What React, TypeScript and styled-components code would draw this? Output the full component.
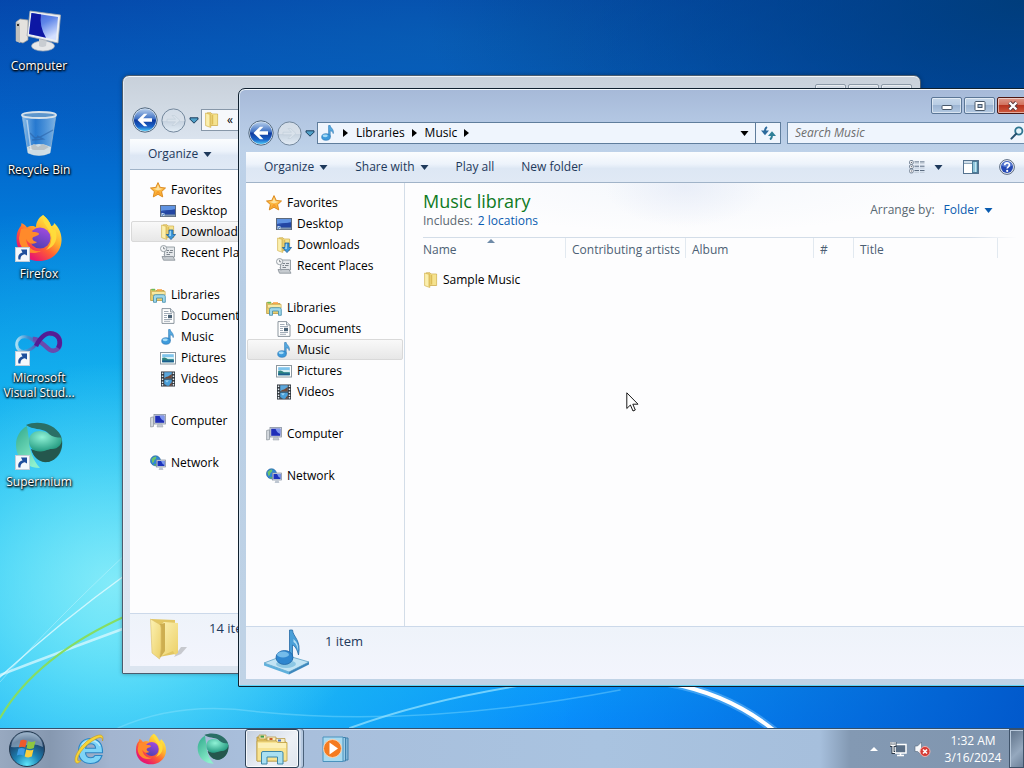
import type { ReactNode } from 'react';
import styled, { createGlobalStyle, css } from 'styled-components';

const GlobalStyle = createGlobalStyle`
  * {
    box-sizing: border-box;
  }

  body {
    margin: 0;
    font-family: 'Open Sans', 'Noto Sans', sans-serif;
    font-size: 12px;
    line-height: 16px;
    color: #000;
  }

  button, input {
    font: inherit;
    color: inherit;
  }

  button {
    border: 0;
    padding: 0;
    background: none;
  }

  a {
    color: inherit;
    text-decoration: none;
  }

  ul {
    list-style: none;
    margin: 0;
    padding: 0;
  }

  svg {
    display: block;
    flex: none;
  }
`;

/* ---------- desktop ---------- */

const Page = styled.div`
  height: 100vh;
  display: flex;
  flex-direction: column;
  overflow: hidden;
  position: relative;
`;

const Desktop = styled.main`
  flex: 1;
  position: relative;
  overflow: hidden;
  background:
    radial-gradient(ellipse 260px 220px at 11% 80%, rgba(150, 242, 250, 0.8), rgba(120, 235, 250, 0.4) 55%, rgba(90, 220, 250, 0) 100%),
    radial-gradient(ellipse 480px 420px at 10% 86%, rgba(60, 212, 246, 0.95), rgba(30, 190, 243, 0.6) 55%, rgba(10, 160, 235, 0) 100%),
    radial-gradient(ellipse 600px 300px at 100% 0, rgba(0, 58, 112, 0.85), rgba(0, 60, 130, 0)),
    linear-gradient(90deg, rgba(0, 80, 200, 0) 55%, rgba(0, 80, 196, 0.85) 100%),
    radial-gradient(ellipse 520px 160px at 44% 6%, rgba(10, 100, 180, 0.6), rgba(10, 100, 180, 0)),
    linear-gradient(180deg, #0446ac 0, #0460c6 16%, #0278d8 30%, #069ce8 52%, #10b0f2 78%, #088cfc 100%);
`;

const Wallpaper = styled.svg`
  position: absolute;
  inset: 0;
  width: 100%;
  height: 100%;
`;

const Shortcuts = styled.ul`
  position: relative;
  width: 78px;
  padding-top: 6px;
`;

const ShortcutItem = styled.li`
  height: 104px;
`;

const ShortcutLink = styled.a`
  display: flex;
  flex-direction: column;
  align-items: center;
  gap: 4px;
  line-height: 15px;
  color: #fff;
  text-align: center;
  text-shadow: 0 1px 2px #000, 1px 1px 2px #000, 0 0 3px rgba(0, 0, 0, 0.7);
`;

const ShortcutPicture = styled.span`
  position: relative;
  width: 48px;
  height: 48px;
`;

const ShortcutArrow = styled.svg`
  position: absolute;
  left: 0;
  bottom: 0;
`;

/* ---------- explorer window ---------- */

const Frame = styled.section<{ $active: boolean; $x: number; $y: number }>`
  position: absolute;
  left: ${p => p.$x}px;
  top: ${p => p.$y}px;
  width: calc(100% - 225px);
  height: calc(100% - 129px);
  display: flex;
  flex-direction: column;
  padding: 0 7px 7px;
  border: 1px solid ${p => (p.$active ? '#10202e' : '#4b5c6e')};
  border-radius: 7px 7px 1px 1px;
  ${p =>
    p.$active
      ? css`
          background: linear-gradient(180deg, #a6b9d8 0, #b2c6e2 30px, #bed2e9 62px, #b8cee5 200px, #c0d3e6 100%);
          box-shadow: inset 0 1px 0 #f4faff, inset 0 -1px 0 #5fd4f8, inset 1px 0 0 #d5e4f2;
        `
      : css`
          background: linear-gradient(180deg, #c8d0da 0, #d0d9e3 30px, #dae3ee 62px, #dce5f0 100%);
          box-shadow: inset 0 1px 0 #f2f6fa, inset 1px 0 0 #e4ecf4, 0 0 4px rgba(0, 0, 0, 0.3);
        `}
`;

const Caption = styled.div`
  display: flex;
  justify-content: flex-end;
  gap: 2px;
  padding: 8px 1px 8px 0;
`;

const CaptionButton = styled.button<{ $close?: boolean; $active: boolean }>`
  width: 31px;
  height: 17px;
  display: flex;
  align-items: center;
  justify-content: center;
  border: 1px solid ${p => (p.$active ? (p.$close ? '#4d1610' : '#5b7696') : '#8c9aa8')};
  border-radius: 2px;
  box-shadow: inset 0 0 0 1px rgba(255, 255, 255, 0.5);
  background: ${p => {
    if (!p.$active) return 'linear-gradient(#d4dce5, #c9d3de)';
    return p.$close
      ? 'linear-gradient(#dc9a8c 0, #d2705c 48%, #b83420 50%, #cf5a3e 100%)'
      : 'linear-gradient(#c6d7ea 0, #b8cce3 48%, #9db5d3 50%, #b3c9e2 100%)';
  }};
`;

const AddressRow = styled.div`
  display: flex;
  height: 22px;
  margin-bottom: 8px;
`;

const Travel = styled.div`
  width: 71px;
  flex: none;
  display: flex;
  align-items: center;
  gap: 3px;
  padding-left: 2px;
`;

const AddressBar = styled.div<{ $active: boolean }>`
  flex: 1;
  display: flex;
  align-items: stretch;
  border: 1px solid ${p => (p.$active ? '#5f7d9c' : '#8797a8')};
  background: ${p => (p.$active ? '#eff5fd' : '#f6f8fb')};
  margin-right: 6px;
`;

const Crumbs = styled.ol`
  flex: 1;
  display: flex;
  align-items: center;
  gap: 8px;
  margin: 0;
  padding: 0 0 0 2px;
  list-style: none;

  li {
    display: flex;
    align-items: center;
    gap: 7px;
  }
`;

const AddressButton = styled.button<{ $divided?: boolean }>`
  width: ${p => (p.$divided ? 25 : 21)}px;
  display: flex;
  align-items: center;
  justify-content: center;
  border-left: ${p => (p.$divided ? '1px solid #5f7d9c' : '0')};
`;

const SearchBox = styled.label`
  flex: 0 0 242px;
  display: flex;
  align-items: center;
  padding: 0 4px 0 7px;
  border: 1px solid #6f8cab;
  background: #eff5fd;
`;

const SearchInput = styled.input`
  flex: 1;
  min-width: 0;
  border: 0;
  padding: 0;
  outline: 0;
  background: none;

  &::placeholder {
    color: #6d6d6d;
    opacity: 1;
    font-style: italic;
  }
`;

const CommandBar = styled.div`
  flex: none;
  height: 31px;
  display: flex;
  align-items: center;
  gap: 27px;
  padding: 0 14px 0 18px;
  color: #1e395b;
  border-bottom: 1px solid #a0b3c8;
  background: linear-gradient(180deg, #fbfdfe 0, #edf3fb 40%, #dde7f4 55%, #e0e9f5 100%);
`;

const CommandButton = styled.button`
  display: flex;
  align-items: center;
  gap: 5px;
  white-space: nowrap;
`;

const CommandIcons = styled.div`
  margin-left: auto;
  display: flex;
  align-items: center;
  gap: 20px;
`;

const ViewButton = styled(CommandButton)`
  gap: 9px;
`;

const Body = styled.div`
  flex: 1;
  min-height: 0;
  display: flex;
  background: #fdfdfe;
`;

const NavPane = styled.nav`
  flex: 0 0 159px;
  display: flex;
  flex-direction: column;
  gap: 21px;
  padding: 9px 1px 0;
  border-right: 1px solid #d3dde8;
`;

const NavLink = styled.a<{ $child?: boolean; $selected?: boolean }>`
  height: 21px;
  display: flex;
  align-items: center;
  gap: 5px;
  padding-left: ${p => (p.$child ? 28 : 18)}px;
  white-space: nowrap;
  border: 1px solid transparent;
  border-radius: 2px;
  ${p =>
    p.$selected &&
    css`
      border-color: #d9d9d9;
      background: linear-gradient(#f9f9f9, #e7e7e7);
    `}
`;

const Listing = styled.div`
  flex: 1;
  min-width: 0;
  background:
    radial-gradient(ellipse 80px 40px at 280px 4px, rgba(226, 232, 246, 0.6), rgba(255, 255, 255, 0)),
    radial-gradient(ellipse 260px 50px at 280px 0, rgba(236, 242, 250, 0.5), rgba(255, 255, 255, 0));
`;

const LibraryHeader = styled.header`
  height: 54px;
  display: flex;
  align-items: center;
  justify-content: space-between;
  padding: 0 36px 0 18px;
  color: #5a6872;
`;

const LibraryTitle = styled.h1`
  margin: 0 0 2px;
  font-size: 18px;
  line-height: 20px;
  font-weight: 400;
  color: #0f7a1e;
`;

const Includes = styled.p`
  margin: 0;
  display: flex;
  gap: 5px;
`;

const Arrange = styled.div`
  display: flex;
  align-items: center;
  gap: 9px;
`;

const BlueLink = styled.a`
  color: #0a5cb0;
`;

const ArrangeButton = styled(CommandButton)`
  color: #0a5cb0;
`;

const Rule = styled.hr`
  margin: 0 12px 0 18px;
  height: 1px;
  border: 0;
  background: linear-gradient(90deg, #d3dde8 92%, rgba(211, 221, 232, 0));
`;

const FileTable = styled.table`
  table-layout: fixed;
  width: 581px;
  margin-left: 12px;
  border-collapse: separate;
  border-spacing: 0;
  text-align: left;
  white-space: nowrap;
`;

const ColumnHead = styled.th<{ $width: number }>`
  position: relative;
  width: ${p => p.$width}px;
  height: 20px;
  padding: 4px 0 0 6px;
  font-weight: 400;
  line-height: 16px;
  vertical-align: bottom;
  color: #4c5f74;
  border-right: 1px solid #e2e9f0;
`;

const SortMark = styled.svg`
  position: absolute;
  left: calc(50% - 4px);
  top: 1px;
`;

const FileCell = styled.td`
  height: 44px;
  padding: 0 0 0 6px;
`;

const FileName = styled.a`
  display: flex;
  align-items: center;
  gap: 4px;
`;

const Details = styled.footer`
  flex: none;
  height: 53px;
  display: flex;
  align-items: flex-start;
  gap: 14px;
  padding: 2px 0 0 17px;
  font-size: 13px;
  color: #1e395b;
  border-top: 1px solid #ccd9ea;
  background: linear-gradient(#eef3fa, #f3f5fd);

  p {
    margin: 4px 0 0;
  }
`;

/* ---------- taskbar ---------- */

const Taskbar = styled.footer`
  flex: none;
  height: 40px;
  display: flex;
  align-items: stretch;
  position: relative;
  border-top: 1px solid #34506c;
  box-shadow: inset 0 1px 0 #cfe2f4;
  background: linear-gradient(
    90deg,
    #98a9c0 0,
    #8698b0 50px,
    #a3b5d0 110px,
    #a8bedb 240px,
    #a9c3e0 600px,
    #a6bfdc 820px,
    #8399b3 850px,
    #8095ae 100%
  );
`;

const StartButton = styled.button`
  width: 58px;
  padding-right: 4px;
  display: flex;
  align-items: center;
  justify-content: center;
`;

const TaskButton = styled.button<{ $running?: boolean }>`
  width: ${p => (p.$running ? 54 : 62)}px;
  display: flex;
  align-items: center;
  justify-content: center;
  margin: ${p => (p.$running ? '0 6px 0 1px' : '0')};
  ${p =>
    p.$running &&
    css`
      border: 1px solid #2e4258;
      border-radius: 3px;
      background: linear-gradient(135deg, #c3cfdf, #eef1f6 60%, #dfe5ee);
      box-shadow: inset 0 0 0 1px rgba(255, 255, 255, 0.8), 2px 0 0 #cddaea, 4px 0 0 #b4c7de, 5px 0 0 #4a617a;
    `}
`;

const Tray = styled.div`
  margin-left: auto;
  display: flex;
  align-items: center;
`;

const TrayButton = styled.button`
  width: 24px;
  height: 24px;
  display: flex;
  align-items: center;
  justify-content: center;
`;

const Clock = styled.button`
  width: 72px;
  margin-left: 3px;
  color: #fff;
  line-height: 17px;
  text-align: center;
`;

const ShowDesktop = styled.button`
  align-self: stretch;
  width: 15px;
  border: 1px solid #3f536a;
  box-shadow: inset 1px 1px 0 #b8c8da;
  background: linear-gradient(135deg, #5d7087, #95a8be 60%, #6d8199);
`;

const Pointer = styled.svg`
  position: absolute;
  left: 626px;
  top: 392px;
  pointer-events: none;
`;

/* ---------- small glyphs ---------- */

function Down({ color = '#1e395b' }: { color?: string }) {
  return (
    <svg width="9" height="5" viewBox="0 0 9 5" aria-hidden>
      <path d="M0.5 0H8.5L4.5 5Z" fill={color} />
    </svg>
  );
}

function Right() {
  return (
    <svg width="5" height="8" viewBox="0 0 5 8" aria-hidden>
      <path d="M0 0L5 4L0 8Z" fill="#000" />
    </svg>
  );
}

function BackIcon() {
  return (
    <svg width="26" height="26" viewBox="0 0 26 26" aria-hidden>
      <defs>
        <linearGradient id="back" x1="0" y1="0" x2="0" y2="1">
          <stop offset="0" stopColor="#b5cdea" />
          <stop offset="0.45" stopColor="#3c6fc4" />
          <stop offset="0.5" stopColor="#10399c" />
          <stop offset="0.8" stopColor="#1a63c8" />
          <stop offset="1" stopColor="#4cc6f5" />
        </linearGradient>
      </defs>
      <circle cx="13" cy="13" r="12.2" fill="#dbe7f3" stroke="#50677f" />
      <circle cx="13" cy="13" r="11" fill="url(#back)" />
      <path d="M5.5 13L12 6.8H15.4L11.2 11.2H20V14.8H11.2L15.4 19.2H12Z" fill="#fff" />
    </svg>
  );
}

function ForwardIcon() {
  return (
    <svg width="25" height="25" viewBox="0 0 25 25" aria-hidden>
      <defs>
        <linearGradient id="fwd" x1="0" y1="0" x2="0" y2="1">
          <stop offset="0" stopColor="#d3dde8" />
          <stop offset="0.5" stopColor="#d8e0e9" />
          <stop offset="0.52" stopColor="#c6d2df" />
          <stop offset="1" stopColor="#e3edf6" />
        </linearGradient>
      </defs>
      <circle cx="12.5" cy="12.5" r="11.6" fill="url(#fwd)" stroke="#73879c" />
      <path d="M19 12.5L13.5 7.5H11L14.5 11.2H6V13.8H14.5L11 17.5H13.5Z" fill="#d9e2eb" stroke="#c0ccd9" strokeWidth="0.6" />
    </svg>
  );
}

function RecentIcon() {
  return (
    <svg width="10" height="7" viewBox="0 0 10 7" aria-hidden>
      <path d="M1 0.8H9V2.2L5 6.2L1 2.2Z" fill="#4fa0c8" stroke="#1d3f5e" strokeWidth="1" />
    </svg>
  );
}

function RefreshIcon() {
  return (
    <svg width="15" height="14" viewBox="0 0 15 14" aria-hidden>
      <path d="M6 1C4.200 2 3.800 3.500 4 6" stroke="#2c6a9c" strokeWidth="2" fill="none" />
      <path d="M0 4.600H8L4 9.200Z" fill="#2c6a9c" />
      <path d="M9 13.500C10.800 12.500 11.200 11 11 8.500" stroke="#2d7f98" strokeWidth="2" fill="none" />
      <path d="M7 9.900H15L11 5.300Z" fill="#2d7f98" />
    </svg>
  );
}

function SearchIcon() {
  return (
    <svg width="14" height="14" viewBox="0 0 14 14" aria-hidden>
      <circle cx="8.8" cy="5" r="3.6" fill="#e6f4fb" stroke="#2f7590" strokeWidth="1.8" />
      <path d="M6.2 7.8L1.4 12.6" stroke="#27506f" strokeWidth="2" strokeLinecap="round" />
    </svg>
  );
}

function MinimizeGlyph() {
  return (
    <svg width="12" height="9" viewBox="0 0 12 9" aria-hidden>
      <rect x="1" y="4.5" width="10" height="4" rx="1" fill="#fff" stroke="#48586a" />
    </svg>
  );
}

function MaximizeGlyph() {
  return (
    <svg width="12" height="10" viewBox="0 0 12 10" aria-hidden>
      <rect x="1" y="0.5" width="10" height="9" rx="0.8" fill="#fff" stroke="#48586a" />
      <rect x="4" y="3.5" width="4" height="3" fill="#a9bfd9" stroke="#48586a" />
    </svg>
  );
}

function CloseGlyph() {
  return (
    <svg width="12" height="10" viewBox="0 0 12 10" aria-hidden>
      <path d="M2.5 1.5L9.5 8.5M9.5 1.5L2.5 8.5" stroke="#57373a" strokeWidth="4.2" />
      <path d="M2.5 1.5L9.5 8.5M9.5 1.5L2.5 8.5" stroke="#fff" strokeWidth="2.4" />
    </svg>
  );
}

function ViewIcon() {
  return (
    <svg width="16" height="14" viewBox="0 0 16 14" aria-hidden>
      {[0.5, 4.8, 9.1].map(y => (
        <g key={y}>
          <rect x="0.6" y={y} width="3.6" height="3.8" rx="1.2" fill="#fff" stroke="#66768a" strokeWidth="0.9" />
          <rect x="1.9" y={y + 1.4} width="1" height="1" fill="#445" />
          <path d={`M5.5 ${y + 1.4}H10M11 ${y + 1.4}H15.5`} stroke="#5b6b80" />
          <path d={`M5.5 ${y + 3.2}H10M11 ${y + 3.2}H15.5`} stroke="#b4bfcc" strokeWidth="0.7" />
        </g>
      ))}
    </svg>
  );
}

function PreviewIcon() {
  return (
    <svg width="16" height="14" viewBox="0 0 16 14" aria-hidden>
      <rect x="0.5" y="0.5" width="15" height="13" fill="#fff" stroke="#54728f" />
      <rect x="1" y="1" width="14" height="2" fill="#cfdeea" />
      <path d="M1 3.5H9" stroke="#8ba4ba" />
      <rect x="9.5" y="1.5" width="5" height="11" fill="#8fc6dc" stroke="#4d7c98" />
      <path d="M12.5 2V12" stroke="#c7e6f2" />
    </svg>
  );
}

function HelpIcon() {
  return (
    <svg width="16" height="16" viewBox="0 0 16 16" aria-hidden>
      <circle cx="8" cy="8" r="7.4" fill="#e6ebf3" stroke="#5b6a80" />
      <circle cx="8" cy="8" r="6" fill="#2448b4" />
      <path d="M2.6 6.5C3.5 1 12.500 1 13.400 6.500C10 8.500 6 8.500 2.600 6.500Z" fill="#6d8fdd" opacity="0.7" />
      <path d="M5.700 6.300C5.800 3.200 10.400 3.200 10.400 6C10.400 7.800 8.200 7.800 8.200 9.600" fill="none" stroke="#fff" strokeWidth="1.700" />
      <circle cx="8.200" cy="11.900" r="1.100" fill="#fff" />
    </svg>
  );
}

/* ---------- 16px explorer icons ---------- */

function Icon16({ children }: { children: ReactNode }) {
  return (
    <svg width="16" height="16" viewBox="0 0 16 16" aria-hidden>
      {children}
    </svg>
  );
}

function StarIcon() {
  return (
    <Icon16>
      <path d="M8 0.6L10.2 5.4L15.5 6L11.600 9.600L12.700 14.900L8 12.300L3.300 14.900L4.400 9.600L0.500 6L5.800 5.400Z" fill="#fbb53c" stroke="#d98214" strokeWidth="0.9" />
      <path d="M8 2.600L9.500 6.200L13 6.700L8 8.600L3 6.700L6.500 6.200Z" fill="#fde2a0" />
      <path d="M4.600 13L8 8.600L11.500 13L8 11.200Z" fill="#f79a28" />
    </Icon16>
  );
}

function DesktopIcon() {
  return (
    <Icon16>
      <rect x="0.500" y="2.500" width="15" height="11" fill="#2c52b0" stroke="#5d6a7c" />
      <path d="M1 3H15V7C10 6 5 8 1 11Z" fill="#5f93e2" />
      <path d="M1 8C6 6 11 8 15 6V12H1Z" fill="#2243a0" opacity="0.8" />
      <rect x="1" y="11.500" width="14" height="1.800" fill="#7f95ae" />
      <rect x="1.500" y="10" width="3" height="3" fill="#c8dcf2" />
      <path d="M2 12.500L4.500 10.300" stroke="#2a63b8" />
    </Icon16>
  );
}

function FolderShape() {
  return (
    <>
      <path d="M3.200 0.800H7L8 2H13.600V13.500H3.200Z" fill="#efd678" stroke="#c9a645" strokeWidth="0.700" />
      <path d="M7.500 2.500H13.200V13H7.500Z" fill="#f5e28f" />
      <path d="M1.600 1L6.800 2.600V15.500L1.600 13.600Z" fill="#fbefae" stroke="#d4b350" strokeWidth="0.700" />
      <path d="M5.600 2.600L6.600 3V15L5.600 14.600Z" fill="#d8b850" />
      <path d="M8.500 3V12.500" stroke="#dcbc58" strokeWidth="1.500" />
    </>
  );
}

function FolderIcon() {
  return (
    <Icon16>
      <FolderShape />
    </Icon16>
  );
}

function DownloadsIcon() {
  return (
    <Icon16>
      <FolderShape />
      <path d="M9 6H13V10.500H15.600L11 15.600L6.400 10.500H9Z" fill="#3d97d8" stroke="#1c5f9e" strokeWidth="0.800" />
      <path d="M9.800 6.800H11V12H9Z" fill="#9ad3f3" />
    </Icon16>
  );
}

function RecentPlacesIcon() {
  return (
    <Icon16>
      <path d="M4.500 2H14.500V12H4.500Z" fill="#e4e7ea" stroke="#8f979e" strokeWidth="0.900" />
      <path d="M6.500 5.500H9M10 5.500H13M6.500 7.500H8M9 7.500H12.500M6.500 9.500H10" stroke="#7d858d" />
      <path d="M2 11.500H13L15 15.200H3.500Z" fill="#c6cbd0" stroke="#868e95" strokeWidth="0.800" />
      <circle cx="3.600" cy="3.600" r="3.100" fill="#f7f8f9" stroke="#8f979e" strokeWidth="0.900" />
      <path d="M3.600 1.800V3.800H5.200" stroke="#666e76" strokeWidth="0.800" fill="none" />
      <path d="M5 12.500L4 9" stroke="#9ba2a9" />
    </Icon16>
  );
}

function LibrariesIcon() {
  return (
    <Icon16>
      <path d="M0.600 2.500H5L6 3.500H14V13.500H0.600Z" fill="#e9cf70" stroke="#b99a42" strokeWidth="0.800" />
      <path d="M1.500 1.800H5V3.500H1.500Z" fill="#6cbb58" />
      <path d="M7 2.200H12V4H7Z" fill="#f6a44a" />
      <path d="M1.500 4.500H15.200V8H1.500Z" fill="#f8e9a4" stroke="#c7a84c" strokeWidth="0.600" />
      <path d="M3.500 15.300V9.500Q3.500 7.700 5.300 7.700H13.500Q15.300 7.700 15.300 9.500V15.300H12.500V11H6.500V15.300Z" fill="#9fd8ea" stroke="#3f8cab" strokeWidth="0.800" />
    </Icon16>
  );
}

function DocumentIcon() {
  return (
    <Icon16>
      <path d="M2 0.600H10.500L14 4V15.400H2Z" fill="#fff" stroke="#7f8a94" strokeWidth="0.900" />
      <path d="M10.500 0.600V4H14" fill="#dfe6ec" stroke="#7f8a94" strokeWidth="0.800" />
      <path d="M4 3.500H8.500M4 5.500H12M4 7.500H7M4 9.500H7M4 11.500H12M4 13.300H10" stroke="#8a97a4" strokeWidth="0.800" />
      <rect x="8" y="6.800" width="4" height="3.400" fill="#4a6276" />
    </Icon16>
  );
}

function MusicIcon() {
  return (
    <Icon16>
      <path d="M8.600 0.500H10.200C10.500 3.200 14.200 4 13.200 8.600C12.900 6.800 11.800 6 10.200 5.800V11.800H8.600Z" fill="#55a9df" stroke="#2a76b4" strokeWidth="0.600" />
      <ellipse cx="6" cy="12" rx="4.300" ry="3.300" fill="#3e9bdc" stroke="#2470b0" strokeWidth="0.600" />
      <ellipse cx="5.200" cy="10.800" rx="2.600" ry="1.400" fill="#a5dbf7" />
    </Icon16>
  );
}

function PicturesIcon() {
  return (
    <Icon16>
      <rect x="0.500" y="2.500" width="15" height="11.500" fill="#fff" stroke="#8c979f" />
      <rect x="2.200" y="4.200" width="11.600" height="8" fill="#7fc4ec" />
      <path d="M2.200 7H13.800V9H2.200Z" fill="#d5eef2" />
      <path d="M2.200 8Q5 6.500 8 9.200H13.800V12.200H2.200Z" fill="#2e8380" />
      <path d="M2.200 10.500H13.800V12.200H2.200Z" fill="#1d5e90" />
    </Icon16>
  );
}

function VideosIcon() {
  return (
    <Icon16>
      <rect x="1" y="0.500" width="14" height="15" fill="#2b3138" />
      {[1.5, 4.5, 7.5, 10.5, 13].map(y => (
        <g key={y} fill="#e6edf3">
          <rect x="1.800" y={y} width="1.500" height="1.600" />
          <rect x="12.700" y={y} width="1.500" height="1.600" />
        </g>
      ))}
      <rect x="4.200" y="1.200" width="7.600" height="6.300" fill="#5ba7dc" />
      <path d="M8 5.500L11.800 3V7.500H4.200L6 6Z" fill="#6f4a3a" />
      <rect x="4.200" y="8.500" width="7.600" height="6.300" fill="#4a9fd8" />
      <path d="M9 14.800L11.800 11V14.800Z" fill="#73412e" />
      <path d="M4.200 13L7 14.800H4.200Z" fill="#4a3a38" />
      <path d="M5 9.500L9 9.200L7 11.500Z" fill="#9fd4f2" />
    </Icon16>
  );
}

function ComputerIcon() {
  return (
    <Icon16>
      <path d="M0.600 4.500L3.500 3.800V13.500L0.600 14Z" fill="#d4d9de" stroke="#8a929a" strokeWidth="0.700" />
      <rect x="4" y="1.500" width="11.500" height="9.500" fill="#d8dce4" stroke="#8791a0" strokeWidth="0.800" />
      <rect x="5.200" y="2.700" width="9.100" height="7.100" fill="#1f2fb8" />
      <path d="M9.500 2.700H14.300V8Q11 7 9.500 2.700Z" fill="#7f97ee" />
      <path d="M7.800 11.200H12L13 14H7Z" fill="#c3c9d1" stroke="#98a0aa" strokeWidth="0.500" />
    </Icon16>
  );
}

function NetworkIcon() {
  return (
    <Icon16>
      <circle cx="5.500" cy="5.800" r="5" fill="#2f86d6" stroke="#2a689f" strokeWidth="0.700" />
      <path d="M1.500 4Q4 1 6 1.500Q7 3.500 4.500 5Q4 8 2.500 8.200Z" fill="#6cc46a" />
      <path d="M4 9Q6 8 6.500 10.200L5 10.700Z" fill="#58b25c" />
      <rect x="6.500" y="5" width="9" height="7" fill="#d3dae6" stroke="#7f8b9c" strokeWidth="0.700" />
      <rect x="7.500" y="6" width="7" height="5" fill="#1c34bc" />
      <path d="M11 6H14.500V10Q12 9 11 6Z" fill="#7b9af0" />
      <path d="M9.500 12.200H12.500L13.400 15H8.600Z" fill="#bdc6d1" />
    </Icon16>
  );
}

/* ---------- 48px icons ---------- */

function BigFolderIcon() {
  return (
    <svg width="48" height="48" viewBox="0 0 48 48" aria-hidden>
      <defs>
        <linearGradient id="bf" x1="0" y1="0" x2="1" y2="1">
          <stop offset="0" stopColor="#fcf2b4" />
          <stop offset="1" stopColor="#ecd068" />
        </linearGradient>
      </defs>
      <path d="M27 41L34 31L40 31L34 38Z" fill="#777" opacity="0.350" />
      <path d="M4 3L28 4V38L12 41Z" fill="#e2c662" />
      <path d="M13 9L17 6L31 7V37L28 39L26 35L14 40Z" fill="url(#bf)" />
      <path d="M13 8L18 7V35L13 42Z" fill="#cdae50" />
      <path d="M3.500 3L12 8Q14 9 14 12V33L12.500 43L5 37Z" fill="url(#bf)" stroke="#dcc068" strokeWidth="0.600" />
    </svg>
  );
}

function BigMusicIcon() {
  return (
    <svg width="48" height="46" viewBox="0 0 48 46" aria-hidden>
      <path d="M1 34L22 26L46 33L26 43Z" fill="#c2e4f4" stroke="#5c9fc4" strokeWidth="0.800" />
      <path d="M1 34L26 43V45.500L1 36.500Z" fill="#5fb0dc" />
      <path d="M26 43L46 33V35.500L26 45.500Z" fill="#3e88bd" />
      <ellipse cx="23" cy="35" rx="10" ry="4" fill="#8cc7e4" />
      <path d="M26.500 1H29.500C30 8 38.500 11 35.500 26C34 20 32 17 29.500 16V30H26.500Z" fill="#4a9fd8" stroke="#2469a4" strokeWidth="0.800" />
      <path d="M30.500 10Q36 15 35 22Q34 15 30.500 13Z" fill="#b5e0f6" />
      <ellipse cx="21.500" cy="28.500" rx="8.500" ry="7" fill="#2f86cf" stroke="#1f64a4" strokeWidth="0.800" />
      <ellipse cx="20" cy="25.500" rx="6" ry="3" fill="#86c8f0" opacity="0.800" />
    </svg>
  );
}

function BigComputerIcon() {
  return (
    <svg width="48" height="48" viewBox="0 0 48 48" aria-hidden>
      <defs>
        <linearGradient id="screen" x1="0" y1="0" x2="0.600" y2="1">
          <stop offset="0" stopColor="#3a5ad8" />
          <stop offset="0.500" stopColor="#5f86e8" />
          <stop offset="1" stopColor="#d4e0ff" />
        </linearGradient>
      </defs>
      <path d="M1 16L5 13L13 14V34L8 37L1 35Z" fill="#e4e2de" stroke="#9a9a98" strokeWidth="0.700" />
      <path d="M1 16L5 17V37L1 35Z" fill="#c2c1bd" />
      <rect x="2" y="18" width="2" height="2" fill="#333" />
      <ellipse cx="28" cy="40" rx="11.500" ry="5" fill="#e6e7e9" stroke="#aeb2b8" strokeWidth="0.700" />
      <path d="M24 32H32L31 40Q27 42 24 40Z" fill="#c9cdd2" />
      <path d="M15 5L45.500 9L43 37L12 30Z" fill="#eceff3" stroke="#a2a8b0" strokeWidth="0.800" />
      <path d="M16.500 7L43 11L41 34L14 28Z" fill="url(#screen)" />
      <path d="M16.500 7L26 8.500Q24 20 31 31.800L14 28Z" fill="#0d17a4" />
    </svg>
  );
}

function RecycleBinIcon() {
  return (
    <svg width="48" height="48" viewBox="0 0 48 48" aria-hidden>
      <defs>
        <linearGradient id="glass" x1="0" y1="0" x2="1" y2="0">
          <stop offset="0" stopColor="#b9dcf4" stopOpacity="0.800" />
          <stop offset="0.400" stopColor="#4a90d8" stopOpacity="0.500" />
          <stop offset="1" stopColor="#a8d0f0" stopOpacity="0.750" />
        </linearGradient>
      </defs>
      <path d="M7 5L13 43Q24 48 35 43L41 5Z" fill="url(#glass)" stroke="#8fb4d2" strokeWidth="0.800" />
      <path d="M12 37Q24 31 36 37L35 43Q24 48 13 43Z" fill="#dfe5e6" opacity="0.900" />
      <path d="M13 38L19 34L23 37L28 34L34 37L29 40L19 40Z" fill="#b9c3c8" />
      <ellipse cx="24" cy="5" rx="17" ry="3" fill="#5d96cc" stroke="#d8e2ea" strokeWidth="1.800" />
      <path d="M15 23L20 28L25 27L38 20M17 30L28 29L22 26" fill="none" stroke="#2c62a6" strokeWidth="1.400" opacity="0.600" />
      <path d="M12 10L16 40" stroke="#fff" strokeWidth="1.500" opacity="0.500" />
    </svg>
  );
}

function FirefoxIcon({ size, id }: { size: number; id: string }) {
  return (
    <svg width={size} height={size} viewBox="0 0 48 48" aria-hidden>
      <defs>
        <linearGradient id={id} x1="0.850" y1="0.100" x2="0.200" y2="0.950">
          <stop offset="0" stopColor="#fff04a" />
          <stop offset="0.350" stopColor="#ffb02c" />
          <stop offset="0.600" stopColor="#ff5f33" />
          <stop offset="0.900" stopColor="#e8196e" />
        </linearGradient>
        <linearGradient id={id + 'g'} x1="0.700" y1="0" x2="0.300" y2="1">
          <stop offset="0" stopColor="#a04be0" />
          <stop offset="1" stopColor="#5040b0" />
        </linearGradient>
      </defs>
      <path d="M28 1C32 4 35 8 36 12C38 12 39 11 39 9C44 13 47 20 46.500 27C46 39 36 47 24 47C11 47 1.500 38 1.500 25C1.500 18 4 14 6 12L6.500 9C9 10 11 12 12 13.500C16 11 19 12 21 13C21 9 23 4 28 1Z" fill={`url(#${id})`} />
      <circle cx="25" cy="24" r="10.500" fill={`url(#${id}g)`} />
      <path d="M6 15C11 13 15 15 18 18C21 18 24 18.500 24 20C23.500 22 19 22 17.500 24C17 26 19 28 22 28C19 31 13 30 11 25C12 34 19 38 26 37C15 43 4 35 4 24Z" fill="#ff8a2b" />
      <path d="M28 1C26 7 32 12 35 18C38 24 36 32 31 36C40 33 44 24 40 15C38 18 36 12 36 12C35 8 32 4 28 1Z" fill="#ffde3c" opacity="0.900" />
    </svg>
  );
}

function VisualStudioIcon() {
  return (
    <svg width="48" height="48" viewBox="0 0 48 48" aria-hidden>
      <defs>
        <linearGradient id="vs" x1="0" y1="0" x2="1" y2="0">
          <stop offset="0" stopColor="#a8def4" />
          <stop offset="0.500" stopColor="#3f8fd0" />
          <stop offset="1" stopColor="#5a4cae" />
        </linearGradient>
      </defs>
      <path d="M21 25C17 20 10 17 5 20C0 24 1 31 6 33C13 35 19 29 24 24" fill="none" stroke="url(#vs)" strokeWidth="3" />
      <path d="M18 21C24 20 29 28 35 32C40 34 45 31 45 25C45 18 40 15 35 16" fill="none" stroke="#6a4aae" strokeWidth="4.500" />
      <path d="M21 28C26 18 33 12 41 17C45 20 46 26 43 30" fill="none" stroke="#541c94" strokeWidth="4.500" />
    </svg>
  );
}

function SupermiumIcon({ size, id }: { size: number; id: string }) {
  return (
    <svg width={size} height={size} viewBox="0 0 48 48" aria-hidden>
      <defs>
        <linearGradient id={id} x1="0" y1="0" x2="0.600" y2="1">
          <stop offset="0" stopColor="#2fa88c" />
          <stop offset="1" stopColor="#8df0cc" />
        </linearGradient>
        <radialGradient id={id + 'b'} cx="0.400" cy="0.300" r="0.700">
          <stop offset="0" stopColor="#8ff2d6" />
          <stop offset="1" stopColor="#239a80" />
        </radialGradient>
      </defs>
      <path d="M12 4C3 9 -1 19 2 30C5 40 14 46 25 46C18 38 14 28 14 18Z" fill={`url(#${id})`} />
      <path d="M11 3C22 -2 40 1 46 14C50 26 44 38 33 40C25 41 19 36 17 29C30 30 40 18 32 10C26 6 18 8 11 3Z" fill="#2a6f66" />
      <path d="M16 27C28 31 40 28 47 18C48 31 39 41 30 40C23 39 18 34 16 27Z" fill="#24574d" />
      <path d="M14 19C14 12 19 9 25 9C31 9 34 12 37 14C41 16 45 15 46.500 16C48 22 43 27 37 27C33 27 31 29 26 29.500C19 30 14 26 14 19Z" fill={`url(#${id}b)`} />
    </svg>
  );
}

function StartOrb() {
  return (
    <svg width="38" height="38" viewBox="0 0 38 38" aria-hidden>
      <defs>
        <radialGradient id="orb" cx="0.500" cy="0.950" r="0.900">
          <stop offset="0" stopColor="#5fe6fa" />
          <stop offset="0.400" stopColor="#1c82b4" />
          <stop offset="0.800" stopColor="#1d3f66" />
          <stop offset="1" stopColor="#6f8ba8" />
        </radialGradient>
      </defs>
      <circle cx="19" cy="19" r="17.500" fill="url(#orb)" stroke="#24394f" />
      <path d="M3 17Q5 3 19 2.500Q33 3 35 17Q27 13 19 15Q11 18 3 17Z" fill="#c4d6e6" opacity="0.500" />
      <path d="M12.500 10.500Q15.500 8.800 18.800 10.800L17.300 17.600Q14 15.800 10.800 17.400Z" fill="#ee5a2c" />
      <path d="M20 11.300Q23.500 13 27.500 11L25.800 18Q22 19.800 18.500 18.200Z" fill="#8fc640" />
      <path d="M10.400 18.700Q13.800 17.200 17 19L15.500 25.700Q12 24 8.800 25.600Z" fill="#3d9ce4" />
      <path d="M18.200 19.600Q21.800 21.200 25.500 19.400L23.800 26.600Q20.200 28.300 16.700 26.500Z" fill="#fbcf3c" />
    </svg>
  );
}

function IeIcon() {
  return (
    <svg width="32" height="32" viewBox="0 0 32 32" aria-hidden>
      <path
        d="M29.500 19.800H12.500C12.800 23.200 15 24.800 17.800 24.800C19.800 24.800 21.200 24 22 22.500H29C27.500 27.500 23.500 30.500 17.500 30.500C10 30.500 5.500 25.500 5.500 18.200C5.500 10.500 10.500 5.500 17.600 5.500C25 5.500 29.800 10.600 29.500 19.800ZM12.600 15.200H22.600C22.400 12.300 20.600 10.800 17.800 10.800C14.900 10.800 13 12.400 12.600 15.200Z"
        fill="#7ed4f7"
        fillRule="evenodd"
        stroke="#2b85c4"
        strokeWidth="1.100"
      />
      <path d="M9 12Q12 7.500 18 7.500Q24 7.500 27 13" fill="none" stroke="#c8f0fd" strokeWidth="1.500" opacity="0.800" />
      <path d="M3.500 30C-2 27 8 8 24 2.500C29 1 31 3 29.500 8C30 4 27 3.500 23 6C13 11 5 21 4.500 26C4.300 28 5.500 28.500 8 27.500C6.500 29.500 5 30.500 3.500 30Z" fill="#f7d437" stroke="#c39a1e" strokeWidth="0.600" />
    </svg>
  );
}

function ExplorerIcon() {
  return (
    <svg width="32" height="32" viewBox="0 0 32 32" aria-hidden>
      <path d="M1 4H7L8 6H13V9H30V28H1Z" fill="#eacb66" stroke="#a98a35" strokeWidth="0.800" />
      <path d="M3 2H10V6H3Z" fill="#f7eab8" stroke="#b3923c" strokeWidth="0.700" />
      <rect x="4.500" y="2.600" width="3.500" height="2" fill="#3f9c4c" />
      <path d="M11 4H20V8H11Z" fill="#f9edc0" stroke="#b3923c" strokeWidth="0.700" />
      <rect x="13.500" y="5" width="3" height="2" fill="#cc5a26" />
      <path d="M20 5.500H29V10H20Z" fill="#f9edc0" stroke="#b3923c" strokeWidth="0.700" />
      <rect x="22" y="6.500" width="3" height="2" fill="#4c6fc0" />
      <path d="M1 8H20L22 9.500H31V28H1Z" fill="#f8e391" stroke="#c2a144" strokeWidth="0.800" />
      <path d="M2 10H30V15H2Z" fill="#fdf3c0" opacity="0.800" />
      <path d="M5.500 31V20Q5.500 18.500 7 18.500H25.500Q27 18.500 27 20V31H21.500V24H11V31Z" fill="#a9e0f2" stroke="#3d86a8" />
    </svg>
  );
}

function MediaIcon() {
  return (
    <svg width="30" height="28" viewBox="0 0 30 28" aria-hidden>
      <path d="M8 3H27V25H8Z" fill="#7fb4d8" stroke="#3f80ac" />
      <path d="M5 2.500H24.500V26H5Z" fill="#9ccbe6" stroke="#3f80ac" />
      <path d="M2 2H22V26.500H2Z" fill="#a8daf0" stroke="#4a92bd" />
      <circle cx="11.500" cy="13.500" r="9" fill="#f47b20" stroke="#f9d2b0" />
      <path d="M8.500 7.500L17 13.500L8.500 19.500Z" fill="#fff" />
    </svg>
  );
}

function TrayNetworkIcon() {
  return (
    <svg width="17" height="16" viewBox="0 0 17 16" aria-hidden>
      <rect x="5" y="3.500" width="11" height="8.500" fill="#5b6f86" stroke="#fff" strokeWidth="1.500" />
      <path d="M7 14.500H14M10.500 12V14.500" stroke="#fff" strokeWidth="1.500" />
      <path d="M1 1.200V4.500H5V1.200M3 4.500V11.500H5" stroke="#2f3c4b" strokeWidth="3" fill="none" />
      <path d="M1 1V4.500H5V1M3 1V11.500H5" stroke="#fff" strokeWidth="1.200" fill="none" />
    </svg>
  );
}

function TrayVolumeIcon() {
  return (
    <svg width="17" height="16" viewBox="0 0 17 16" aria-hidden>
      <path d="M1 5H3.500L7.500 1V14L3.500 10.500H1Z" fill="#f5f7fa" stroke="#56677a" strokeWidth="0.600" />
      <circle cx="11" cy="10.500" r="5" fill="#d63a34" stroke="#f3b8b4" strokeWidth="0.900" />
      <path d="M9 8.500L13 12.500M13 8.500L9 12.500" stroke="#fff" strokeWidth="1.600" />
    </svg>
  );
}

/* ---------- composition ---------- */

type NavEntry = { name: string; icon: ReactNode };

const navGroups: { head: NavEntry; items: NavEntry[] }[] = [
  {
    head: { name: 'Favorites', icon: <StarIcon /> },
    items: [
      { name: 'Desktop', icon: <DesktopIcon /> },
      { name: 'Downloads', icon: <DownloadsIcon /> },
      { name: 'Recent Places', icon: <RecentPlacesIcon /> },
    ],
  },
  {
    head: { name: 'Libraries', icon: <LibrariesIcon /> },
    items: [
      { name: 'Documents', icon: <DocumentIcon /> },
      { name: 'Music', icon: <MusicIcon /> },
      { name: 'Pictures', icon: <PicturesIcon /> },
      { name: 'Videos', icon: <VideosIcon /> },
    ],
  },
  { head: { name: 'Computer', icon: <ComputerIcon /> }, items: [] },
  { head: { name: 'Network', icon: <NetworkIcon /> }, items: [] },
];

const shortcuts = [
  { name: 'Computer', icon: <BigComputerIcon />, linked: false },
  { name: 'Recycle Bin', icon: <RecycleBinIcon />, linked: false },
  { name: 'Firefox', icon: <FirefoxIcon size={48} id="ffDesk" />, linked: true },
  { name: 'Microsoft Visual Stud...', icon: <VisualStudioIcon />, linked: true },
  { name: 'Supermium', icon: <SupermiumIcon size={48} id="smDesk" />, linked: true },
];

const columns = [
  { name: 'Name', width: 149 },
  { name: 'Contributing artists', width: 120 },
  { name: 'Album', width: 128 },
  { name: '#', width: 40 },
  { name: 'Title', width: 144 },
];

type ExplorerProps = {
  active?: boolean;
  x: number;
  y: number;
  selected: string;
  search: string;
  crumbs: ReactNode;
  commands: ReactNode;
  details: ReactNode;
  children?: ReactNode;
};

function Explorer({ active = false, x, y, selected, search, crumbs, commands, details, children }: ExplorerProps) {
  return (
    <Frame $active={active} $x={x} $y={y} aria-label={selected}>
      <Caption>
        <CaptionButton $active={active} aria-label="Minimize">
          <MinimizeGlyph />
        </CaptionButton>
        <CaptionButton $active={active} aria-label="Maximize">
          <MaximizeGlyph />
        </CaptionButton>
        <CaptionButton $active={active} $close aria-label="Close">
          <CloseGlyph />
        </CaptionButton>
      </Caption>
      <AddressRow>
        <Travel>
          <button aria-label="Back">
            <BackIcon />
          </button>
          <button aria-label="Forward">
            <ForwardIcon />
          </button>
          <button aria-label="Recent pages">
            <RecentIcon />
          </button>
        </Travel>
        <AddressBar $active={active}>
          <Crumbs>{crumbs}</Crumbs>
          <AddressButton aria-label="Previous locations">
            <Down color="#000" />
          </AddressButton>
          <AddressButton $divided aria-label="Refresh">
            <RefreshIcon />
          </AddressButton>
        </AddressBar>
        <SearchBox>
          <SearchInput type="text" placeholder={search} aria-label={search} />
          <SearchIcon />
        </SearchBox>
      </AddressRow>
      <CommandBar>
        <CommandButton>
          Organize <Down />
        </CommandButton>
        {commands}
        <CommandIcons>
          <ViewButton aria-label="Change your view">
            <ViewIcon />
            <Down />
          </ViewButton>
          <CommandButton aria-label="Preview pane">
            <PreviewIcon />
          </CommandButton>
          <CommandButton aria-label="Help">
            <HelpIcon />
          </CommandButton>
        </CommandIcons>
      </CommandBar>
      <Body>
        <NavPane>
          {navGroups.map(({ head, items }) => (
            <ul key={head.name}>
              <li>
                <NavLink href="#">
                  {head.icon}
                  {head.name}
                </NavLink>
              </li>
              {items.map(item => (
                <li key={item.name}>
                  <NavLink href="#" $child $selected={item.name === selected}>
                    {item.icon}
                    {item.name}
                  </NavLink>
                </li>
              ))}
            </ul>
          ))}
        </NavPane>
        <Listing>{children}</Listing>
      </Body>
      <Details>{details}</Details>
    </Frame>
  );
}

function MusicLibrary() {
  return (
    <>
      <LibraryHeader>
        <div>
          <LibraryTitle>Music library</LibraryTitle>
          <Includes>
            Includes: <BlueLink href="#">2 locations</BlueLink>
          </Includes>
        </div>
        <Arrange>
          Arrange by:
          <ArrangeButton>
            Folder <Down color="#0a5cb0" />
          </ArrangeButton>
        </Arrange>
      </LibraryHeader>
      <Rule />
      <FileTable>
        <thead>
          <tr>
            {columns.map((col, i) => (
              <ColumnHead key={col.name} $width={col.width}>
                {i === 0 && (
                  <SortMark width="8" height="4" viewBox="0 0 8 4" aria-hidden>
                    <path d="M0 4L4 0L8 4Z" fill="#6f8ba8" />
                  </SortMark>
                )}
                {col.name}
              </ColumnHead>
            ))}
          </tr>
        </thead>
        <tbody>
          <tr>
            <FileCell>
              <FileName href="#">
                <FolderIcon />
                Sample Music
              </FileName>
            </FileCell>
            <FileCell />
            <FileCell />
            <FileCell />
            <FileCell />
          </tr>
        </tbody>
      </FileTable>
    </>
  );
}

export default function App() {
  return (
    <Page>
      <GlobalStyle />
      <Desktop>
        <Wallpaper viewBox="0 0 1024 728" preserveAspectRatio="none" aria-hidden>
          <g fill="none" strokeLinecap="round">
            <path d="M0 677Q60 622 128 573" stroke="#e4fbff" strokeWidth="1.500" opacity="0.800" />
            <path d="M0 682Q50 625 128 552" stroke="#d2f8ff" strokeWidth="1" opacity="0.400" />
            <path d="M0 675Q60 652 128 627" stroke="#e4fbff" strokeWidth="2.500" opacity="0.700" />
            <path d="M0 718Q36 656 128 615" stroke="#86dd62" strokeWidth="2" />
            <path d="M118 728Q180 700 260 712Q420 728 620 690" stroke="#9be9ff" strokeWidth="1.500" opacity="0.350" />
            <path d="M350 728Q420 702 517 686" stroke="#9be6ff" strokeWidth="2" opacity="0.700" />
            <path d="M668 683Q730 694 776 732" stroke="#8fd0ff" strokeWidth="8" opacity="0.400" />
            <path d="M668 683Q730 694 776 732" stroke="#fff" strokeWidth="4" />
          </g>
        </Wallpaper>
        <Shortcuts>
          {shortcuts.map(s => (
            <ShortcutItem key={s.name}>
              <ShortcutLink href="#">
                <ShortcutPicture>
                  {s.icon}
                  {s.linked && (
                    <ShortcutArrow width="15" height="15" viewBox="0 0 15 15" aria-hidden>
                      <rect x="0.500" y="0.500" width="14" height="14" fill="#f4f8fc" stroke="#c2cdd8" />
                      <path d="M3.500 12.500C2.500 8.500 4.500 6 7.500 5.500L6 2.500H12V8.500L9.800 7.200C6.500 8 5.500 9.500 5.500 12.500Z" fill="#1f4f9c" />
                    </ShortcutArrow>
                  )}
                </ShortcutPicture>
                {s.name}
              </ShortcutLink>
            </ShortcutItem>
          ))}
        </Shortcuts>

        <Explorer
          x={122}
          y={75}
          selected="Downloads"
          search="Search Downloads"
          crumbs={
            <li>
              <FolderIcon />«
            </li>
          }
          commands={null}
          details={
            <>
              <BigFolderIcon />
              <p>14 items</p>
            </>
          }
        />

        <Explorer
          active
          x={238}
          y={88}
          selected="Music"
          search="Search Music"
          crumbs={
            <>
              <li>
                <MusicIcon />
                <Right />
              </li>
              <li>
                Libraries <Right />
              </li>
              <li>
                Music <Right />
              </li>
            </>
          }
          commands={
            <>
              <CommandButton>
                Share with <Down />
              </CommandButton>
              <CommandButton>Play all</CommandButton>
              <CommandButton>New folder</CommandButton>
            </>
          }
          details={
            <>
              <BigMusicIcon />
              <p>1 item</p>
            </>
          }
        >
          <MusicLibrary />
        </Explorer>
      </Desktop>

      <Taskbar>
        <StartButton aria-label="Start">
          <StartOrb />
        </StartButton>
        <TaskButton aria-label="Internet Explorer">
          <IeIcon />
        </TaskButton>
        <TaskButton aria-label="Firefox">
          <FirefoxIcon size={32} id="ffTask" />
        </TaskButton>
        <TaskButton aria-label="Supermium">
          <SupermiumIcon size={32} id="smTask" />
        </TaskButton>
        <TaskButton $running aria-label="Windows Explorer">
          <ExplorerIcon />
        </TaskButton>
        <TaskButton aria-label="Windows Media Player">
          <MediaIcon />
        </TaskButton>
        <Tray>
          <TrayButton aria-label="Show hidden icons">
            <svg width="8" height="4" viewBox="0 0 8 4" aria-hidden>
              <path d="M0 4L4 0L8 4Z" fill="#fff" />
            </svg>
          </TrayButton>
          <TrayButton aria-label="Network">
            <TrayNetworkIcon />
          </TrayButton>
          <TrayButton aria-label="Volume">
            <TrayVolumeIcon />
          </TrayButton>
          <Clock>
            1:32 AM
            <br />
            3/16/2024
          </Clock>
          <ShowDesktop aria-label="Show desktop" />
        </Tray>
      </Taskbar>

      <Pointer width="13" height="21" viewBox="0 0 13 21" aria-hidden>
        <path d="M0.800 0.800V16.500L4.400 13L7 19L9.300 18L6.800 12.200H12Z" fill="#fff" stroke="#000" strokeWidth="0.900" />
      </Pointer>
    </Page>
  );
}
